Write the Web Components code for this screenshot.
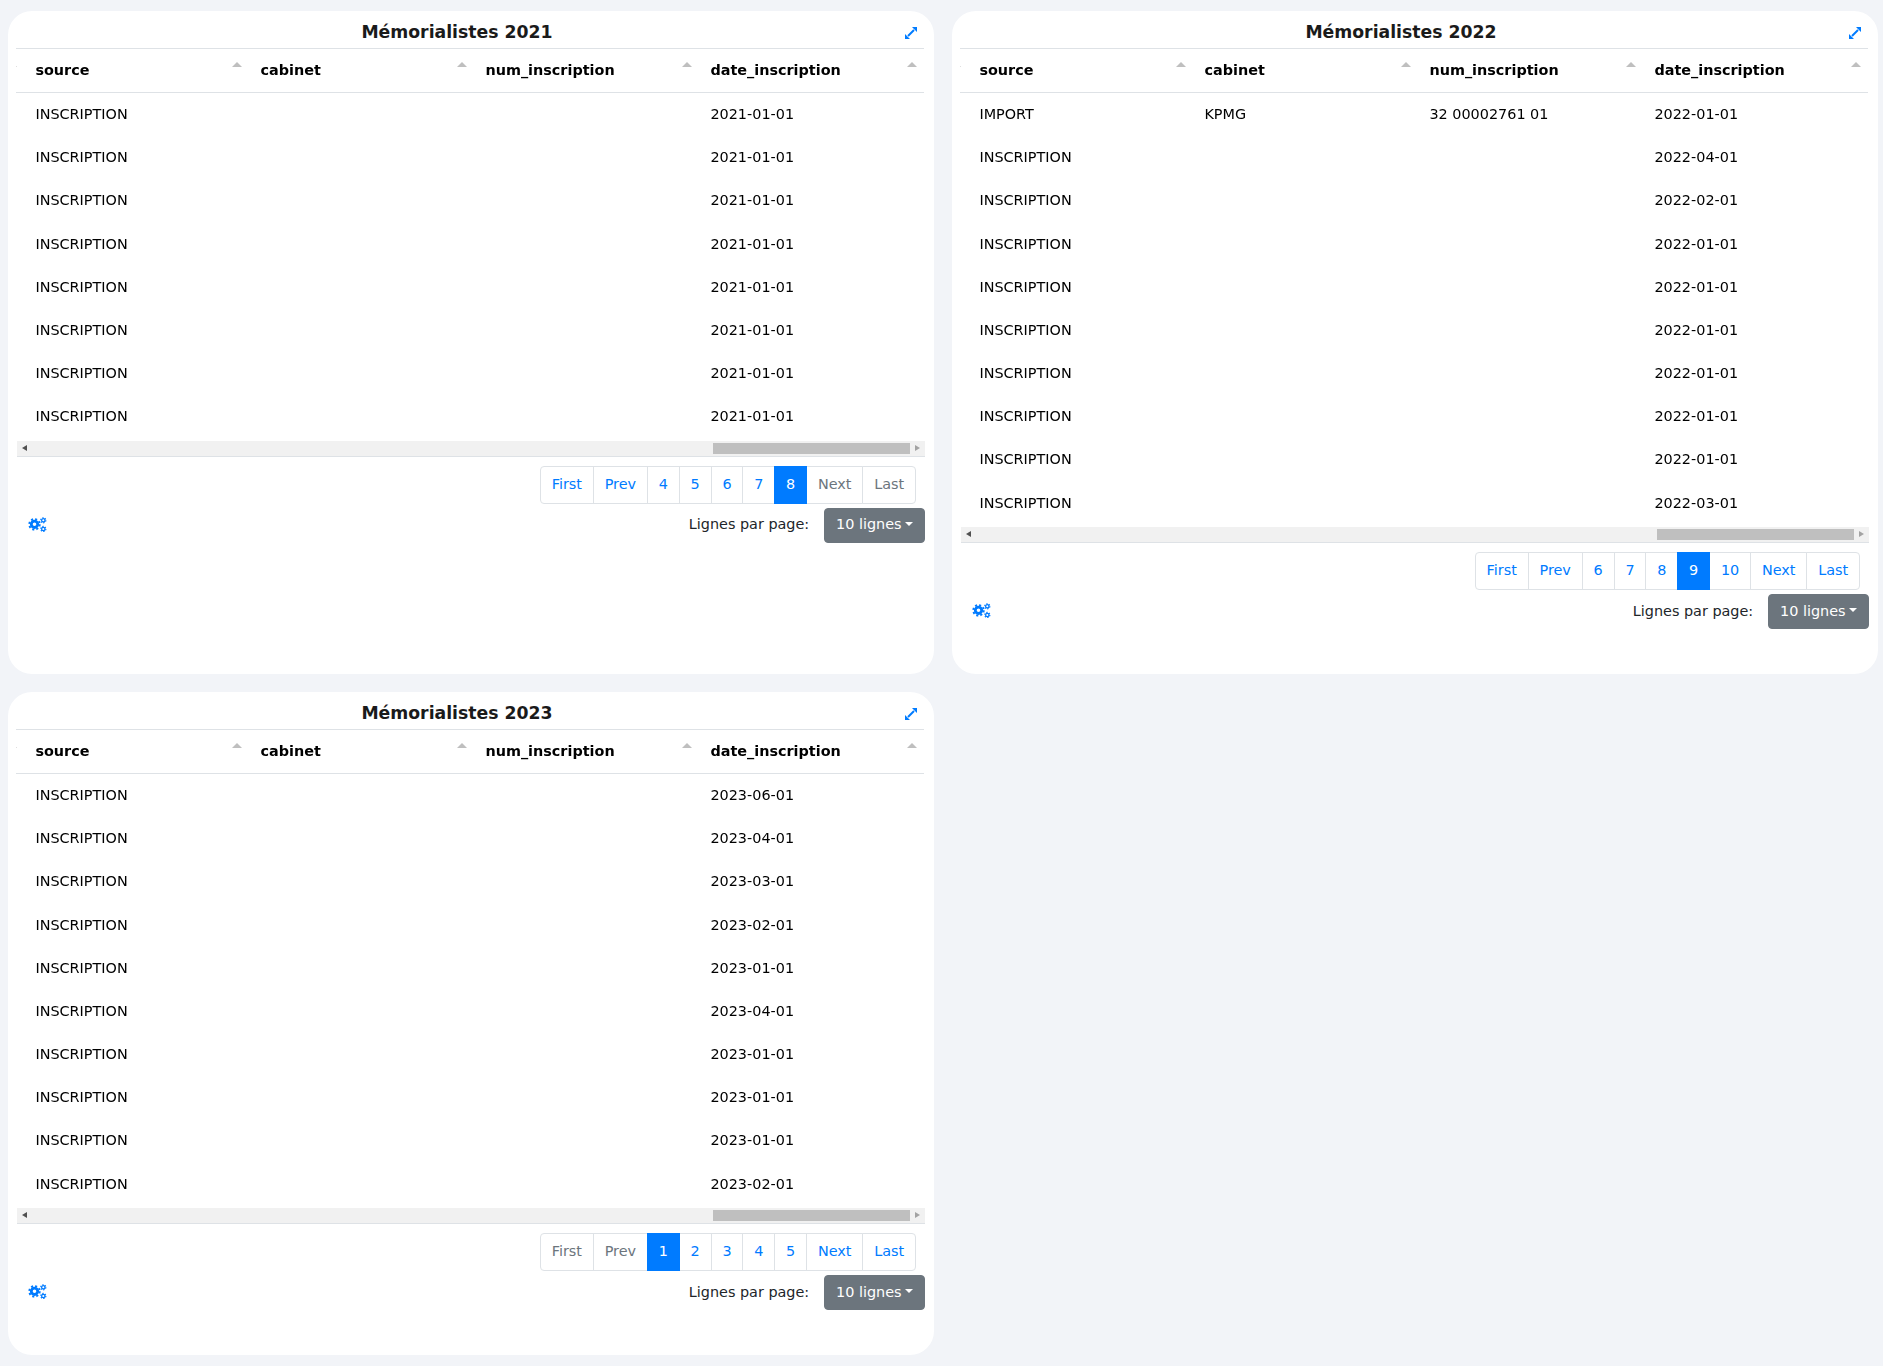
<!DOCTYPE html>
<html lang="fr"><head><meta charset="utf-8"><title>Mémorialistes</title>
<style>
html,body{margin:0;background:#f2f4f8}
body{font:14.4px/1.5 "DejaVu Sans",sans-serif;color:#212529}
</style></head><body>
<memo-dashboard>
  <memo-card heading="Mémorialistes 2021">
    <memo-table rows='[["INSCRIPTION","","","2021-01-01"],["INSCRIPTION","","","2021-01-01"],["INSCRIPTION","","","2021-01-01"],["INSCRIPTION","","","2021-01-01"],["INSCRIPTION","","","2021-01-01"],["INSCRIPTION","","","2021-01-01"],["INSCRIPTION","","","2021-01-01"],["INSCRIPTION","","","2021-01-01"]]'></memo-table>
    <memo-pager pages="4,5,6,7,8" current="8" disabled="Next,Last"></memo-pager>
    <memo-footer></memo-footer>
  </memo-card>
  <memo-card heading="Mémorialistes 2022">
    <memo-table rows='[["IMPORT","KPMG","32 00002761 01","2022-01-01"],["INSCRIPTION","","","2022-04-01"],["INSCRIPTION","","","2022-02-01"],["INSCRIPTION","","","2022-01-01"],["INSCRIPTION","","","2022-01-01"],["INSCRIPTION","","","2022-01-01"],["INSCRIPTION","","","2022-01-01"],["INSCRIPTION","","","2022-01-01"],["INSCRIPTION","","","2022-01-01"],["INSCRIPTION","","","2022-03-01"]]'></memo-table>
    <memo-pager pages="6,7,8,9,10" current="9" disabled=""></memo-pager>
    <memo-footer></memo-footer>
  </memo-card>
  <memo-card heading="Mémorialistes 2023">
    <memo-table rows='[["INSCRIPTION","","","2023-06-01"],["INSCRIPTION","","","2023-04-01"],["INSCRIPTION","","","2023-03-01"],["INSCRIPTION","","","2023-02-01"],["INSCRIPTION","","","2023-01-01"],["INSCRIPTION","","","2023-04-01"],["INSCRIPTION","","","2023-01-01"],["INSCRIPTION","","","2023-01-01"],["INSCRIPTION","","","2023-01-01"],["INSCRIPTION","","","2023-02-01"]]'></memo-table>
    <memo-pager pages="1,2,3,4,5" current="1" disabled="First,Prev"></memo-pager>
    <memo-footer></memo-footer>
  </memo-card>
</memo-dashboard>
<script>
function shadow(el, html){ el.attachShadow({mode:'open'}).innerHTML = html; return el.shadowRoot; }

customElements.define('memo-dashboard', class extends HTMLElement{
  connectedCallback(){ if(this.shadowRoot) return;
    shadow(this, `<style>
      :host{display:grid;grid-template-columns:926px 926px;gap:18px;padding:11px 5px 9.6px 8px;box-sizing:border-box;width:1883px}
    </style><slot></slot>`);
  }
});

customElements.define('memo-card', class extends HTMLElement{
  connectedCallback(){ if(this.shadowRoot) return;
    shadow(this, `<style>
      :host{display:block;background:#fff;border-radius:24px;padding:0 9px 45px 8px;min-width:0}
      header{display:flex;align-items:center;height:37px;border-bottom:1px solid #dee2e6;margin-right:1px}
      h2{flex:1;margin:0;padding:6px 0 0 1px;text-align:center;font:bold 17.28px/1.2 "DejaVu Sans",sans-serif;color:#1a1a1a}
      a{flex:none;width:27px;height:37px;display:flex;align-items:center;justify-content:center;padding:7px 0 0 1px;box-sizing:border-box}
      svg{display:block}
    </style>
    <header><h2>${this.getAttribute('heading')}</h2>
      <a aria-label="Agrandir"><svg width="12" height="12" viewBox="0 0 12 12" fill="#007bff"><path d="M3 9L9 3" stroke="#007bff" stroke-width="2" fill="none"/><path d="M7 0H12V5Z M0 7V12H5Z"/></svg></a>
    </header><slot></slot>`);
  }
});

customElements.define('memo-table', class extends HTMLElement{
  connectedCallback(){ if(this.shadowRoot) return;
    const rows = JSON.parse(this.getAttribute('rows'));
    const heads = ['source','cabinet','num_inscription','date_inscription'];
    shadow(this, `<style>
      :host{display:block}
      .scroll{overflow:hidden;will-change:transform;margin-right:1px}
      table{border-collapse:separate;border-spacing:0;table-layout:fixed;width:1000px;margin-left:-91.4px;color:#000}
      col.first{width:100px} col{width:225px}
      th,td{padding:10.8px;text-align:left;font-size:14.4px;line-height:21.6px;white-space:nowrap;overflow:hidden}
      th{font-weight:bold;border-bottom:1px solid #dee2e6;position:relative}
      th i{position:absolute;right:7.5px;top:13px;width:0;height:0;border:5px solid transparent;border-top:0;border-bottom-color:#bfbfbf}
      .bar{margin-top:2px;margin-left:1px;height:15px;background:#f1f1f1;border-bottom:1px solid #dee2e6;position:relative}
      .thumb{position:absolute;left:696px;width:197px;top:2px;height:11px;background:#bfbfbf}
      .l,.r{position:absolute;top:4px;width:0;height:0;border:3.5px solid transparent}
      .l{left:4.7px;border-left:0;border-right:5px solid #505050}
      .r{right:5px;border-right:0;border-left:5px solid #a3a3a3}
    </style>
    <div class="scroll"><table>
      <colgroup><col class="first"><col><col><col><col></colgroup>
      <thead><tr><th><i></i></th>${heads.map(h=>`<th>${h}<i></i></th>`).join('')}</tr></thead>
      <tbody>${rows.map(r=>`<tr><td></td>${r.map(c=>`<td>${c}</td>`).join('')}</tr>`).join('')}</tbody>
    </table></div>
    <div class="bar"><span class="l"></span><span class="thumb"></span><span class="r"></span></div>`);
  }
});

customElements.define('memo-pager', class extends HTMLElement{
  connectedCallback(){ if(this.shadowRoot) return;
    const dis = (this.getAttribute('disabled')||'').split(',');
    const cur = this.getAttribute('current');
    const items = ['First','Prev',...this.getAttribute('pages').split(','),'Next','Last'];
    shadow(this, `<style>
      :host{display:flex;justify-content:flex-end;padding:9px 9px 0 0}
      ul{display:flex;list-style:none;margin:0;padding:0}
      li{padding:7.2px 10.85px;line-height:21.6px;font-size:14.4px;color:#007bff;background:#fff;border:1px solid #dee2e6;margin-left:-1px;height:21.6px}
      li:first-child{margin-left:0;border-radius:4px 0 0 4px}
      li:last-child{border-radius:0 4px 4px 0}
      li.dis{color:#6c757d}
      li.on{background:#007bff;border-color:#007bff;color:#fff;position:relative}
    </style><ul>${items.map(t=>`<li class="${t===cur?'on':dis.includes(t)?'dis':''}">${t}</li>`).join('')}</ul>`);
  }
});

customElements.define('memo-footer', class extends HTMLElement{
  connectedCallback(){ if(this.shadowRoot) return;
    const gear=(cx,cy,r,w,t,n)=>{const c=2*Math.PI*(r+w/2+t/2-.3);const d=c/n/2;
      return `<circle cx="${cx}" cy="${cy}" r="${r}" fill="none" stroke="#007bff" stroke-width="${w}"/><circle cx="${cx}" cy="${cy}" r="${r+w/2+t/2-.3}" fill="none" stroke="#007bff" stroke-width="${t}" stroke-dasharray="${d} ${d}"/>`};
    shadow(this, `<style>
      :host{display:flex;align-items:center;justify-content:space-between;margin-top:4px;padding-left:12px}
      svg{display:block;margin-bottom:2px}
      .right{display:flex;align-items:center;gap:15px;color:#212529}
      button{font:14.4px/21.6px "DejaVu Sans",sans-serif;color:#fff;background:#6c757d;border:1px solid #6c757d;border-radius:4px;padding:5.7px 10.8px;white-space:nowrap;height:35px;box-sizing:border-box}
      button::after{content:"";display:inline-block;margin-left:3.7px;vertical-align:3.7px;border-top:4.3px solid;border-left:4.3px solid transparent;border-right:4.3px solid transparent}
    </style>
    <svg width="19" height="15" viewBox="0 0 19 15" aria-label="Réglages">${gear(6.5,7.3,3.2,2.8,1.9,8)}${gear(15.3,3.3,1.7,1.3,1.1,6)}${gear(15.3,12,1.7,1.3,1.1,6)}</svg>
    <div class="right"><span>Lignes par page:</span><button>10 lignes</button></div>`);
  }
});
</script>
</body></html>
